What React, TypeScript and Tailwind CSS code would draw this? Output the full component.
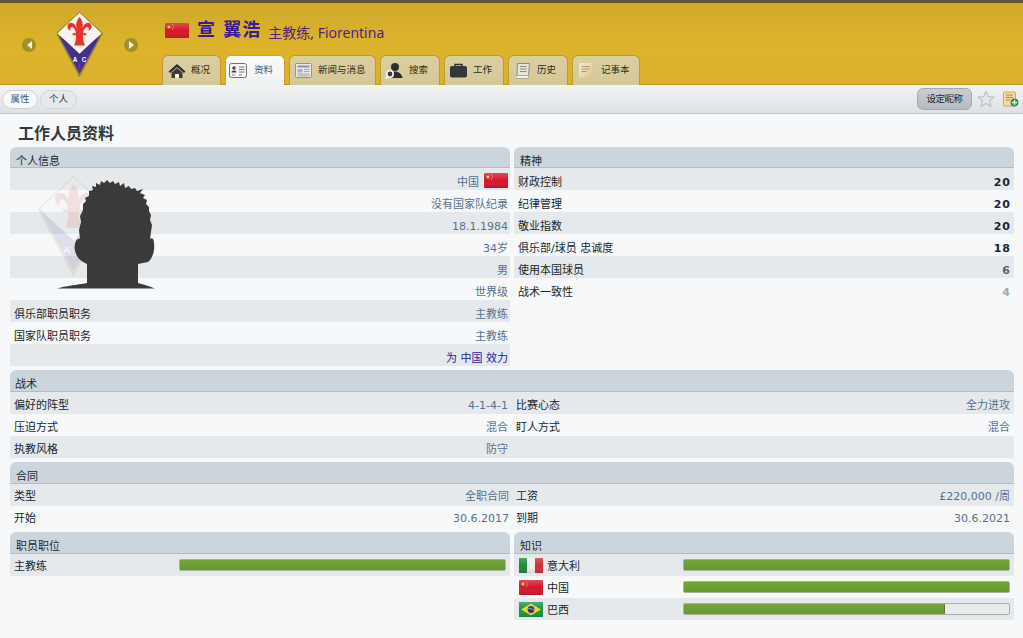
const font = { fontFamily: '"DejaVu Sans", "Noto Sans CJK SC", sans-serif' };

const Gloss = ({ id }: { id: string }) => (
  <>
    <defs>
      <linearGradient id={id} x1="0" y1="0" x2="0" y2="1">
        <stop offset="0" stopColor="#fff" stopOpacity=".22" />
        <stop offset=".5" stopColor="#fff" stopOpacity="0" />
        <stop offset="1" stopColor="#000" stopOpacity=".12" />
      </linearGradient>
    </defs>
    <rect width="24" height="15" fill={`url(#${id})`} />
  </>
);

const ChinaFlag = ({ id = "cn" }: { id?: string }) => (
  <svg width="24" height="15" viewBox="0 0 24 15">
    <rect width="24" height="15" rx="1" fill="#d5172c" />
    <circle cx="4" cy="4" r="1.6" fill="#f0b94e" />
    <circle cx="7.5" cy="1.8" r=".6" fill="#f0b94e" />
    <circle cx="8.5" cy="4" r=".6" fill="#f0b94e" />
    <circle cx="7.5" cy="6.2" r=".6" fill="#f0b94e" />
    <Gloss id={id} />
  </svg>
);

const ItalyFlag = () => (
  <svg width="24" height="15" viewBox="0 0 24 15">
    <rect width="8" height="15" fill="#1d8a3c" />
    <rect x="8" width="8" height="15" fill="#eef0ee" />
    <rect x="16" width="8" height="15" fill="#cf2b3b" />
    <Gloss id="it" />
  </svg>
);

const BrazilFlag = () => (
  <svg width="24" height="15" viewBox="0 0 24 15">
    <rect width="24" height="15" fill="#18944a" />
    <path d="M12 1.5 22 7.5 12 13.5 2 7.5z" fill="#f1d21f" />
    <circle cx="12" cy="7.5" r="3.4" fill="#27347c" />
    <path d="M8.8 6.8c2-.5 4.500 0 6.300 1.400" stroke="#e8e8e8" strokeWidth=".6" fill="none" />
    <Gloss id="br" />
  </svg>
);

const Crest = ({ className = "" }: { className?: string }) => (
  <svg className={className} viewBox="0 0 48 68">
    <path d="M23 0 47 22 23 67 -1 22z" fill="#8f8040" />
    <path d="M23 40 44 24.500 23 63 2 24.500z" fill="#41308f" />
    <path d="M23 1 45.500 22 23 43 .5 22z" fill="#f7f4ec" />
    <path
      d="M23 5.500c3 3.500 4 7 3 11.500 1-4 4-6.500 7-5.500 3.500 1.500 3 6.500-1 8 1.500-2.500-.5-4.500-2.500-3.500-1.500 1-2.500 3-2.800 6h3.300v2h-3.500c0 4 .5 6.500 2 10.500h-11c1.500-4 2-6.500 2-10.500H16v-2h3.300c-.3-3-1.300-5-2.800-6-2-1-4 1-2.500 3.500-4-1.500-4.500-6.500-1-8 3-1 6 1.500 7 5.500-1-4.500 0-8 3-11.500z"
      fill="#e5322b"
    />
    <text x="18.500" y="51" fontSize="6.500" fontWeight="700" fill="#fff" textAnchor="middle" fontFamily="Liberation Sans">A</text>
    <text x="27.500" y="51" fontSize="6.500" fontWeight="700" fill="#fff" textAnchor="middle" fontFamily="Liberation Sans">C</text>
    <path d="M23 53v6" stroke="#a82f4a" strokeWidth="1.500" />
  </svg>
);

const Silhouette = ({ className = "" }: { className?: string }) => (
  <svg className={className} viewBox="0 0 98 109">
    <path
      fill="#3a3a3a"
      d="M0 108.500C8 106 20 105 30 103V84C26 82 22 80 20 76 17 71 17 65 19 61 20 59 22 58 23 59L22 50 24 42 23 36 26 30 26 24 29 21 28 18 32 16 32 11 36 10 35 6 39 7 39 3 43 5 44 1 47 3 50 0 53 3 56 1 58 4 62 2 63 6 67 3 68 8 72 6 74 9 78 8 80 11 86 9 83 13 88 15 86 18 90 20 89 24 92 27 92 31 94 35 93 40 95 45 94 52 93 59C95 57 97 59 97 63 98 70 96 78 91 82L81 84V103C88 105 92 106 98 108.500z"
    />
  </svg>
);

const HouseIcon = () => (
  <svg width="18" height="16" viewBox="0 0 18 16">
    <path d="M9 1 .5 8.500 2 10l7-6 7 6 1.500-1.500z" fill="#2c2c2c" />
    <path d="M3.500 9.500 9 5l5.500 4.500V15h-3.500v-4H7v4H3.500z" fill="#3c3c3c" />
    <rect x="7.200" y="11" width="3.600" height="4" fill="#f4f2ea" />
  </svg>
);

const CardIcon = () => (
  <svg width="18" height="15" viewBox="0 0 18 15">
    <rect x=".5" y=".5" width="17" height="14" rx="2" fill="#f4f5f6" stroke="#6d7175" />
    <circle cx="5" cy="5" r="1.700" fill="#444" />
    <path d="M2.500 9.500c0-1.500 1-2 2.500-2s2.500.5 2.500 2z" fill="#444" />
    <path d="M10 4h5.500M10 6.500h5.500M10 9h5.500M3 12h3M10 12h3" stroke="#777" />
  </svg>
);

const NewsIcon = () => (
  <svg width="17" height="15" viewBox="0 0 17 15">
    <rect x=".5" y=".5" width="16" height="14" rx="1" fill="#e7e9eb" stroke="#8e9398" />
    <rect x="2.500" y="2.500" width="12" height="2" fill="#8a9198" />
    <rect x="2.500" y="6" width="5" height="3.500" fill="#aab2b9" />
    <path d="M9 6.500h5.500M9 8.500h5.500M2.500 11h12M2.500 12.800h12" stroke="#a3a9af" />
  </svg>
);

const SearchPersonIcon = () => (
  <svg width="18" height="18" viewBox="0 0 18 18">
    <circle cx="10" cy="5" r="4" fill="#2e2e33" />
    <path d="M4 16c0-4 2.500-6.500 6-6.500s7 2.500 7.500 6.500z" fill="#2e2e33" />
    <circle cx="5" cy="12" r="3.200" fill="#3a3a3a" stroke="#f6f6f6" strokeWidth="1.600" />
    <path d="M2.500 14.500.8 16.500" stroke="#f6f6f6" strokeWidth="2" />
  </svg>
);

const BriefcaseIcon = () => (
  <svg width="17" height="15" viewBox="0 0 17 15">
    <path d="M5 3V1.500h7V3" fill="none" stroke="#2c2c30" strokeWidth="1.400" />
    <rect y="3" width="17" height="11.500" rx="2" fill="#35353d" />
  </svg>
);

const ScrollIcon = () => (
  <svg width="14" height="16" viewBox="0 0 14 16">
    <path d="M1.500.5h12l-1 12.500H1z" fill="#e8e6dc" stroke="#8d8d84" />
    <rect y="12.500" width="12.500" height="3" rx="1" fill="#f2f1e9" stroke="#a5a49a" />
    <path d="M4 3.500h6.500M4 6h6.500M4 8.500h6.500" stroke="#8a8a82" />
  </svg>
);

const NoteIcon = () => (
  <svg width="13" height="15" viewBox="0 0 13 15">
    <defs>
      <linearGradient id="note" x1="0" y1="0" x2="1" y2="1">
        <stop offset="0" stopColor="#f5ecd0" />
        <stop offset="1" stopColor="#e0c48c" />
      </linearGradient>
    </defs>
    <rect width="13" height="15" rx="1" fill="url(#note)" />
    <path d="M2.500 3.500h8M2.500 6h8M2.500 8.500h5" stroke="#a79a78" />
  </svg>
);

const tabs = [
  { label: "概况", icon: <HouseIcon />, w: "w-[59px]", gap: "gap-[5px]", pl: "pl-[5px]" },
  { label: "资料", icon: <CardIcon />, w: "w-[60px]", gap: "gap-[7px]", pl: "pl-[3px]", active: true },
  { label: "新闻与消息", icon: <NewsIcon />, w: "w-[87px]", gap: "gap-[6px]", pl: "pl-[5px]" },
  { label: "搜索", icon: <SearchPersonIcon />, w: "w-[60px]", gap: "gap-[6px]", pl: "pl-[4px]" },
  { label: "工作", icon: <BriefcaseIcon />, w: "w-[60px]", gap: "gap-[6px]", pl: "pl-[5px]" },
  { label: "历史", icon: <ScrollIcon />, w: "w-[60px]", gap: "gap-[7px]", pl: "pl-[7px]" },
  { label: "记事本", icon: <NoteIcon />, w: "w-[68px]", gap: "gap-[9px]", pl: "pl-[6px]" },
];

const Panel = ({ title, titleClass = "pl-[6px]", headClass = "h-[22px]", children }: { title: string; titleClass?: string; headClass?: string; children: React.ReactNode }) => (
  <div>
    <div className={`flex items-center pt-[10px] rounded-t-[6px] bg-[#ccd5dc] border-b border-[#b4bcc3] text-[11px] text-[#1c2a33] ${headClass} ${titleClass}`}>
      {title}
    </div>
    {children}
  </div>
);

const Row = ({ odd, left, right, className = "" }: { odd: boolean; left?: React.ReactNode; right?: React.ReactNode; className?: string }) => (
  <div className={`h-[22px] flex items-center justify-between text-[11px] ${odd ? "bg-[#e5e9ec]" : "bg-[#f6f8fa]"} ${className}`}>
    <span className="text-[#20262b]">{left}</span>
    {right}
  </div>
);

const Val = ({ children, className = "text-[#56718e]" }: { children: React.ReactNode; className?: string }) => (
  <span className={className}>{children}</span>
);

const Bar = ({ pct = 100, className = "" }: { pct?: number; className?: string }) => (
  <div className={`h-[12px] rounded-[2px] border border-[#a9aeaa] bg-[#e9ebec] overflow-hidden ${className}`}>
    <div
      className="h-full -m-px box-content border border-[#557a2b] rounded-[2px] bg-gradient-to-b from-[#74a535] to-[#659a2e]"
      style={{ width: `${pct}%` }}
    />
  </div>
);

const mental = [
  { label: "财政控制", val: "20", cls: "text-[#17263a]" },
  { label: "纪律管理", val: "20", cls: "text-[#17263a]" },
  { label: "敬业指数", val: "20", cls: "text-[#17263a]" },
  { label: "俱乐部/球员 忠诚度", val: "18", cls: "text-[#17263a]" },
  { label: "使用本国球员", val: "6", cls: "text-[#5c6268]" },
  { label: "战术一致性", val: "4", cls: "text-[#a3a8ac]" },
];

const personal: { left?: string; right: React.ReactNode }[] = [
  {
    right: (
      <span className="flex items-center gap-[5px] text-[#56718e]">
        中国
        <span className="flex -mt-[6px]">
          <ChinaFlag />
        </span>
      </span>
    ),
  },
  { right: <Val>没有国家队纪录</Val> },
  { right: <Val>18.1.1984</Val> },
  { right: <Val>34岁</Val> },
  { right: <Val>男</Val> },
  { right: <Val>世界级</Val> },
  { left: "俱乐部职员职务", right: <Val>主教练</Val> },
  { left: "国家队职员职务", right: <Val>主教练</Val> },
  { right: <Val className="text-[#1c1c9e]">为 中国 效力</Val> },
];

const App = () => {
  return (
    <div className="w-[1023px] h-[638px] overflow-hidden bg-[#f6f8fa]" style={font}>
      <div className="h-[85px] flex border-t-[3px] border-[#5f5632] border-b border-b-[#b8962a] bg-gradient-to-b from-[#cfa82c] via-[#dcb32a] to-[#dcb22a]">
        <div className="w-[162px] shrink-0 relative flex items-start justify-between pl-[22px] pr-[24px] pt-[35px]">
          <div className="w-[14px] h-[14px] rounded-full bg-[#a08f2c] flex items-center justify-center">
            <div className="w-0 h-0 border-y-[4px] border-y-transparent border-r-[5px] border-r-[#f3f0e0]" />
          </div>
          <div className="w-[14px] h-[14px] rounded-full bg-[#a08f2c] flex items-center justify-center">
            <div className="w-0 h-0 border-y-[4px] border-y-transparent border-l-[5px] border-l-[#f3f0e0]" />
          </div>
          <Crest className="absolute left-[57px] top-[8px] w-[47px] h-[68px]" />
        </div>
        <div className="flex-1 flex flex-col justify-between">
          <div className="flex items-center pl-[3px] pt-[14px] h-[40px]">
            <ChinaFlag id="cnhead" />
            <span className="ml-[8px] text-[18px] leading-[24px] font-bold text-[#3a1a90] tracking-[1px]">宣 翼浩</span>
            <span className="ml-[7px] mt-[5px] text-[14px] leading-[20px] text-[#57207c]" style={{ fontFamily: '"Noto Sans", "Noto Sans CJK SC", sans-serif' }}>主教练, Fiorentina</span>
          </div>
          <div className="flex gap-[4px] h-[30px] -mb-px">
            {tabs.map((t) => (
              <div
                key={t.label}
                className={`${t.w} ${t.pl} ${t.gap} flex items-center rounded-t-[6px] border border-b-0 text-[9.500px] ${
                  t.active
                    ? "border-[#c9a52e] bg-gradient-to-b from-[#fbfcfc] to-[#eef1f2] text-[#3f5c78]"
                    : "border-[#c29a28] bg-gradient-to-b from-[#dccf9f] to-[#d4c799] text-[#2f2c22]"
                }`}
              >
                <span className="shrink-0 flex">{t.icon}</span>
                <span className="whitespace-nowrap">{t.label}</span>
              </div>
            ))}
          </div>
        </div>
      </div>

      <div className="h-[29px] flex items-center pl-[2px] pr-[4px] gap-[2px] bg-gradient-to-b from-[#f1f3f4] to-[#dfe2e4] border-b border-[#c3c6c9] text-[9.500px]">
        <span className="w-[36px] h-[19px] flex items-center justify-center rounded-full bg-[#f8f9f9] border border-[#ccd0d3] text-[#3f5c78]">属性</span>
        <span className="w-[37px] h-[19px] flex items-center justify-center rounded-full bg-[#e6e9ea] border border-[#d3d6d8] text-[#333]">个人</span>
        <span className="ml-auto w-[55px] h-[22px] flex items-center justify-center rounded-[6px] bg-gradient-to-b from-[#c9ced4] to-[#b5bbc2] border border-[#a4aab0] text-[#26282b] tracking-[-.5px]">设定昵称</span>
        <svg className="ml-[3px]" width="18" height="18" viewBox="0 0 18 18">
          <path d="M9 1.500 11.300 6.500 16.800 7.100 12.700 10.800 13.900 16.200 9 13.400 4.100 16.200 5.300 10.800 1.200 7.100 6.700 6.500z" fill="#e6e8e9" stroke="#bcc0c3" strokeWidth="1.200" />
        </svg>
        <svg className="ml-[6px]" width="16" height="16" viewBox="0 0 16 16">
          <rect x=".5" y="1" width="12" height="14" rx="1" fill="#f3dca0" stroke="#cda95e" />
          <path d="M3 4h7M3 6.500h7M3 9h4" stroke="#a08a58" />
          <circle cx="11.500" cy="11.500" r="4" fill="#1c9a3f" />
          <path d="M11.500 9v5M9 11.500h5" stroke="#eaf6ea" strokeWidth="1.400" />
        </svg>
      </div>

      <div className="pl-[10px] pr-[9px]">
        <h1 className="h-[33px] pl-[8px] pt-[6px] flex items-center text-[16px] font-bold text-[#33383c]">工作人员资料</h1>

        <div className="flex gap-[4px]">
          <div className="w-[500px] relative">
            <Panel title="个人信息" headClass="h-[21px]">
              {personal.map((r, i) => (
                <Row key={i} odd={i % 2 === 0} left={r.left} right={r.right} className="pt-[8px] pl-[4px] pr-[2px]" />
              ))}
            </Panel>
            <Crest className="absolute left-[29px] top-[28px] w-[72px] h-[104px] opacity-[.12]" />
            <Silhouette className="absolute left-[47px] top-[33px] w-[98px] h-[109px]" />
          </div>
          <div className="w-[500px]">
            <Panel title="精神" headClass="h-[21px]">
              {mental.map((r, i) => (
                <Row
                  key={r.label}
                  odd={i % 2 === 0}
                  left={r.label}
                  right={<b className={`tracking-[1px] ${r.cls}`}>{r.val}</b>}
                  className="pt-[8px] pl-[4px] pr-[3px]"
                />
              ))}
            </Panel>
          </div>
        </div>

        <div className="mt-[4px]">
          <Panel title="战术" titleClass="pl-[5px]">
            <div className="grid grid-cols-[502px_502px]">
              <Row odd left="偏好的阵型" right={<Val>4-1-4-1</Val>} className="pt-[6px] pl-[4px] pr-[4px]" />
              <Row odd left="比赛心态" right={<Val>全力进攻</Val>} className="pt-[6px] pl-[4px] pr-[4px]" />
              <Row odd={false} left="压迫方式" right={<Val>混合</Val>} className="pt-[6px] pl-[4px] pr-[4px]" />
              <Row odd={false} left="盯人方式" right={<Val>混合</Val>} className="pt-[6px] pl-[4px] pr-[4px]" />
              <Row odd left="执教风格" right={<Val>防守</Val>} className="pt-[6px] pl-[4px] pr-[4px]" />
              <Row odd />
            </div>
          </Panel>
        </div>

        <div className="mt-[4px]">
          <Panel title="合同">
            <div className="grid grid-cols-[502px_502px]">
              <Row odd left="类型" right={<Val>全职合同</Val>} className="pt-[5px] pl-[4px] pr-[3px]" />
              <Row odd left="工资" right={<Val>£220,000 /周</Val>} className="pt-[5px] pl-[4px] pr-[4px]" />
              <Row odd={false} left="开始" right={<Val>30.6.2017</Val>} className="pt-[5px] pl-[4px] pr-[3px]" />
              <Row odd={false} left="到期" right={<Val>30.6.2021</Val>} className="pt-[5px] pl-[4px] pr-[4px]" />
            </div>
          </Panel>
        </div>

        <div className="flex gap-[4px] mt-[4px]">
          <div className="w-[500px]">
            <Panel title="职员职位">
              <div className="h-[22px] flex items-center pl-[4px] pr-[4px] text-[11px] text-[#20262b] bg-[#e5e9ec]">
                <span className="w-[165px] pt-[5px]">主教练</span>
                <Bar className="flex-1" />
              </div>
            </Panel>
          </div>
          <div className="w-[500px]">
            <Panel title="知识">
              {[
                { flag: <ItalyFlag />, name: "意大利", pct: 100 },
                { flag: <ChinaFlag id="cnk" />, name: "中国", pct: 100 },
                { flag: <BrazilFlag />, name: "巴西", pct: 80 },
              ].map((k, i) => (
                <div key={k.name} className={`h-[22px] flex items-center pl-[5px] pr-[4px] text-[11px] text-[#20262b] ${i % 2 === 0 ? "bg-[#e5e9ec]" : "bg-[#f6f8fa]"}`}>
                  {k.flag}
                  <span className="ml-[4px] w-[136px] pt-[5px]">{k.name}</span>
                  <Bar pct={k.pct} className="flex-1" />
                </div>
              ))}
            </Panel>
          </div>
        </div>
      </div>
    </div>
  );
};

export default App;
